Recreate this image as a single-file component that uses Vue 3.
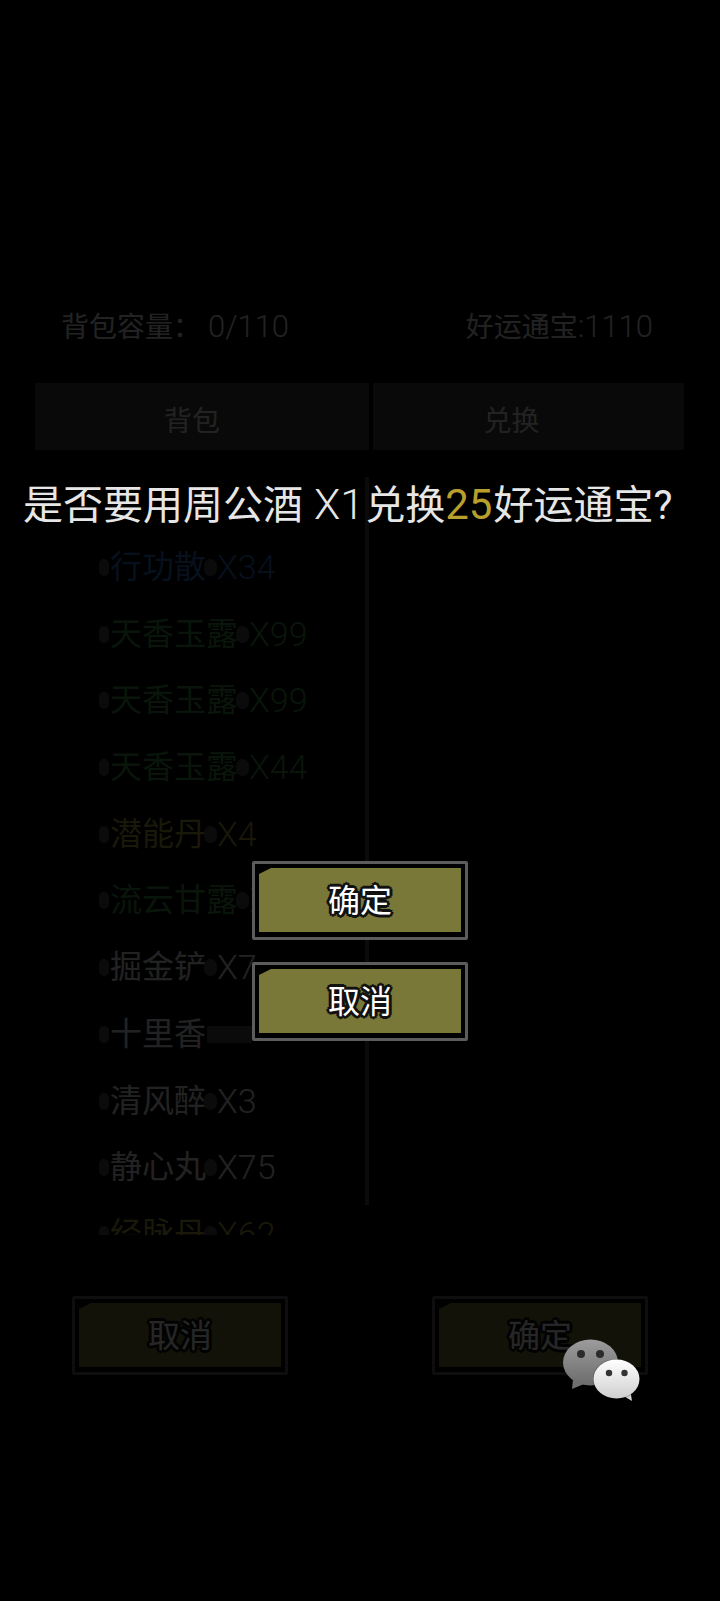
<template>
  <div class="page">
    <div class="head">
      <span>背包容量：&nbsp;<span class="digits">0/110</span></span>
      <span>好运通宝<span class="digits">:1110</span></span>
    </div>
    <div class="tabs">
      <div class="tab left">背包</div>
      <div class="tab right">兑换</div>
    </div>
    <div class="panel">
      <div class="list">
        <div v-for="(item, i) in items" :key="i" class="row" :style="{ color: item.color }">
          <span class="label" :class="{ blank: !item.count }">{{ item.name }}</span>
          <span v-if="item.count" class="count">X{{ item.count }}</span>
        </div>
      </div>
      <div class="divider"></div>
    </div>
    <div class="actions">
      <button class="btn">取消</button>
      <button class="btn">确定</button>
    </div>

    <div class="mask">
      <p class="question">是否要用周公酒<span class="times">X1</span>兑换<span class="num">25</span>好运通宝?</p>
      <div class="choices">
        <button class="btn">确定</button>
        <button class="btn">取消</button>
      </div>
    </div>

    <svg class="wechat" width="80" height="64" viewBox="0 0 80 64">
      <defs>
        <linearGradient id="grayFill" x1="0" y1="0" x2="0" y2="1">
          <stop offset="0" stop-color="#9c9c9c" />
          <stop offset="1" stop-color="#6c6c6c" />
        </linearGradient>
        <linearGradient id="whiteFill" x1="0" y1="0" x2="0" y2="1">
          <stop offset="0" stop-color="#ffffff" />
          <stop offset="1" stop-color="#cfcfcf" />
        </linearGradient>
      </defs>
      <path d="M11 40 L10 50 L22 45 Z" fill="#707070" />
      <ellipse cx="28.5" cy="23.5" rx="27.5" ry="23" fill="url(#grayFill)" />
      <circle cx="19" cy="15" r="4" fill="#2b2b2b" />
      <circle cx="38" cy="15" r="4" fill="#2b2b2b" />
      <path d="M60 56 L70 62 L68 50 Z" fill="#d4d4d4" />
      <ellipse cx="54.5" cy="40" rx="23.5" ry="20" fill="#000" opacity="0.35" />
      <ellipse cx="54.5" cy="40" rx="23" ry="19.5" fill="url(#whiteFill)" />
      <circle cx="47" cy="34" r="3.2" fill="#333" />
      <circle cx="62.5" cy="34" r="3.2" fill="#333" />
    </svg>
  </div>
</template>

<script setup>
const green = "#3f8f45"
const grey = "#e0e0e0"

const items = [
  { name: "行功散", count: 34, color: "#2f6fc0" },
  { name: "天香玉露", count: 99, color: green },
  { name: "天香玉露", count: 99, color: green },
  { name: "天香玉露", count: 44, color: green },
  { name: "潜能丹", count: 4, color: "#a8a040" },
  { name: "流云甘露", count: 64, color: green },
  { name: "掘金铲", count: 7, color: grey },
  { name: "十里香", color: grey },
  { name: "清风醉", count: 3, color: grey },
  { name: "静心丸", count: 75, color: grey },
  { name: "经脉丹", count: 62, color: "#a8a040" },
]
</script>

<style>
html, body {
  background: #000;
}
</style>

<style scoped>
.page {
  position: relative;
  width: 720px;
  height: 1601px;
  overflow: hidden;
  background: #000;
  color: #e0e0e0;
  font-family: Roboto, "Noto Sans CJK SC", sans-serif;
  padding-top: 307px;
  box-sizing: border-box;
}

.head {
  display: flex;
  justify-content: space-between;
  padding: 0 67px 0 61px;
  height: 40px;
  line-height: 40px;
  font-size: 28px;
}

.digits {
  font-size: 31px;
  font-weight: 300;
}

.tabs {
  display: flex;
  gap: 4px;
  margin: 36px 36px 0 35px;
}

.tab {
  height: 67px;
  line-height: 77px;
  text-align: center;
  font-size: 28px;
  background: #3c3c3c;
  box-sizing: border-box;
}

.left {
  width: 334px;
  padding-right: 20px;
}

.right {
  flex: 1;
  padding-right: 34px;
}

.panel {
  display: flex;
  height: 758px;
  margin-top: 27px;
  padding-left: 110px;
}

.list {
  width: 255px;
  height: 701px;
  padding-top: 57px;
  margin-left: -14px;
  padding-left: 14px;
  box-sizing: content-box;
  overflow: hidden;
  flex: none;
}

.row {
  display: flex;
  gap: 11px;
  height: 66.7px;
  line-height: 66.7px;
  font-size: 32px;
  white-space: nowrap;
}

/* dark smudges the sprite outline leaves around each name */
.label,
.count {
  position: relative;
}

.label::before,
.count::before,
.blank::after {
  content: "";
  position: absolute;
  top: 25px;
  height: 17px;
  border-radius: 9px;
  background: #4e4e4e;
}

.label::before {
  left: -11px;
  width: 10px;
}

.count::before {
  left: -13px;
  width: 13px;
}

.blank::after {
  left: 97px;
  width: 45px;
  border-radius: 2px;
}

.count {
  font-size: 34px;
  font-weight: 300;
}

.divider {
  width: 4px;
  height: 728px;
  background: #4a4a4a;
}

.actions {
  display: flex;
  justify-content: space-between;
  padding: 0 72px;
  margin-top: 61px;
}

.btn {
  width: 216px;
  height: 79px;
  padding: 0 0 6px;
  border: 3px solid #5c5c5c;
  border-radius: 2px;
  box-sizing: border-box;
  background: #000;
  color: #fff;
  font-family: inherit;
  font-size: 32px;
  position: relative;
  z-index: 0;
  text-shadow: -3px 0 #111, 3px 0 #111, 0 -3px #111, 0 3px #111, -2px -2px #111, 2px -2px #111, -2px 2px #111, 2px 2px #111;
}

.btn::before {
  content: "";
  position: absolute;
  left: 4px;
  right: 4px;
  top: 4px;
  bottom: 5px;
  z-index: -1;
  background: #7a7838;
  clip-path: polygon(12px 0, 100% 0, 100% 100%, 0 100%, 0 6px);
}

.mask {
  position: absolute;
  inset: 0;
  background: rgba(0, 0, 0, 0.85);
  display: flex;
  flex-direction: column;
  padding-top: 477px;
  box-sizing: border-box;
}

.question {
  margin: 0;
  padding-left: 23px;
  font-size: 40px;
  line-height: 54px;
  color: #e6e6e6;
  white-space: nowrap;
}

.times {
  margin: 0 1px 0 11px;
  font-weight: 300;
  font-size: 43px;
}

.num {
  color: #b89f2e;
  font-size: 42px;
  margin-right: 1px;
}

.choices {
  display: flex;
  flex-direction: column;
  align-items: center;
  gap: 22px;
  margin-top: 328px;
}

.wechat {
  position: absolute;
  left: 562px;
  top: 1339px;
}
</style>
